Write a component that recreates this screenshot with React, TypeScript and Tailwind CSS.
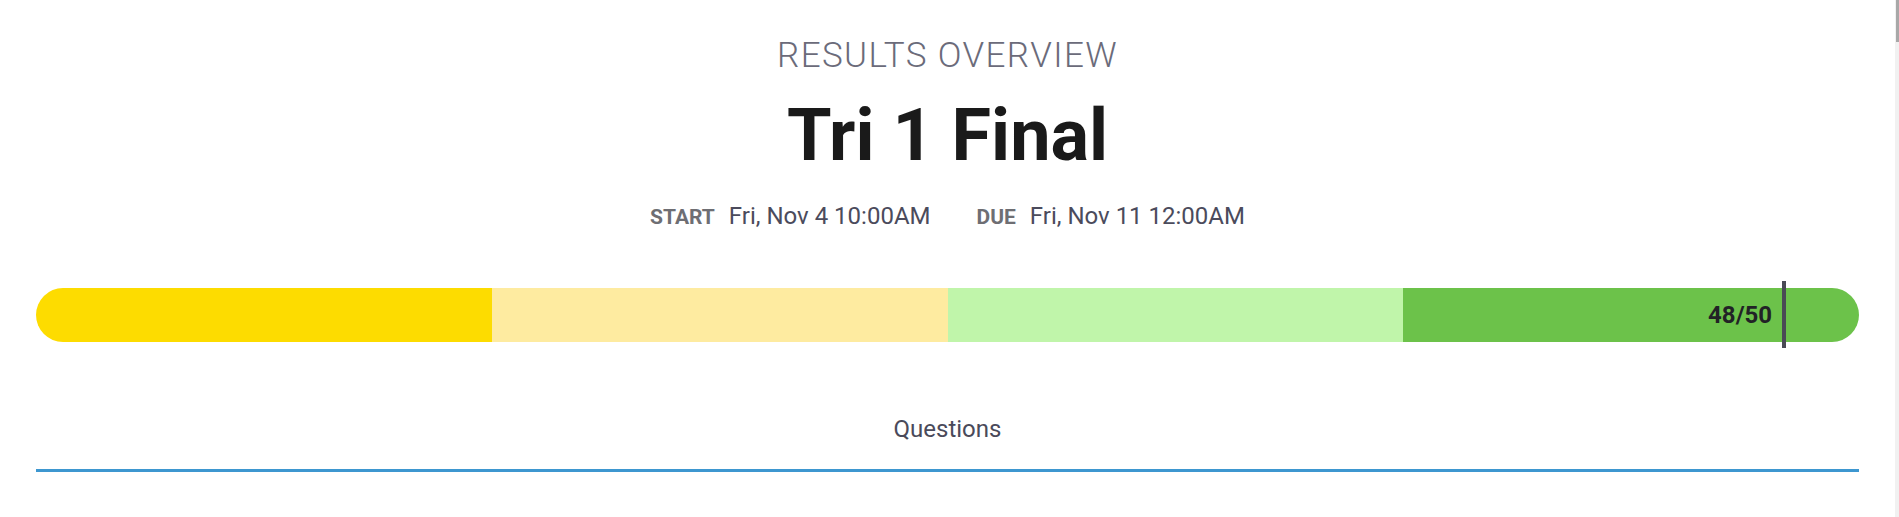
import React from "react";

const score = 48;
const total = 50;

const segments = ["bg-[#fddc00]", "bg-[#feeba0]", "bg-[#c0f5aa]", "bg-[#6cc24a]"];

const ResultsOverview = () => {
  const pct = (score / total) * 100;

  return (
    <div className="flex-1 px-9 pt-[38px] font-['Roboto',sans-serif]">
      {/* Header */}
      <div className="flex flex-col items-center">
        <p className="text-[35px] leading-none font-light tracking-[1.4px] text-[#6b6b7a] uppercase">Results Overview</p>
        <h1 className="mt-[27px] text-[72px] leading-none font-bold text-[#1a1a1a]">Tri 1 Final</h1>
        <div className="mt-[32px] flex items-baseline">
          <span className="text-[21px] leading-none font-bold text-[#6e6e73] uppercase">Start</span>
          <span className="ml-[14px] text-[24px] leading-none text-[#4b4b5c]">Fri, Nov 4 10:00AM</span>
          <span className="ml-[46px] text-[21px] leading-none font-bold text-[#6e6e73] uppercase">Due</span>
          <span className="ml-[14px] text-[24px] leading-none text-[#4b4b5c]">Fri, Nov 11 12:00AM</span>
        </div>
      </div>

      {/* Score bar */}
      <div className="relative mt-[60px] h-[54px]">
        <div className="flex h-full rounded-full overflow-hidden">
          {segments.map((c) => (
            <div key={c} className={`flex-1 ${c}`} />
          ))}
        </div>
        <span
          className="absolute top-0 bottom-0 flex items-center text-[24px] font-bold text-[#222226]"
          style={{ right: `calc(${100 - pct}% + 14px)` }}
        >
          {score}/{total}
        </span>
        <div
          className="absolute -top-[7px] -bottom-[6px] w-1 bg-[#4a4a55]"
          style={{ right: `${100 - pct}%` }}
        />
      </div>

      {/* Tabs */}
      <div className="mt-[75px] flex flex-col items-center">
        <span className="text-[24px] leading-none text-[#4a4a5a]">Questions</span>
      </div>
      <div className="mt-[28px] h-[3px] bg-[#3d97d0]" />
    </div>
  );
};

export default function App() {
  return (
    <div className="min-h-screen flex bg-white">
      <ResultsOverview />
      <div className="w-1 bg-[#f1f1f1] flex justify-end">
        <div className="w-[3px] h-[42px] bg-[#a8a8a8]" />
      </div>
    </div>
  );
}
